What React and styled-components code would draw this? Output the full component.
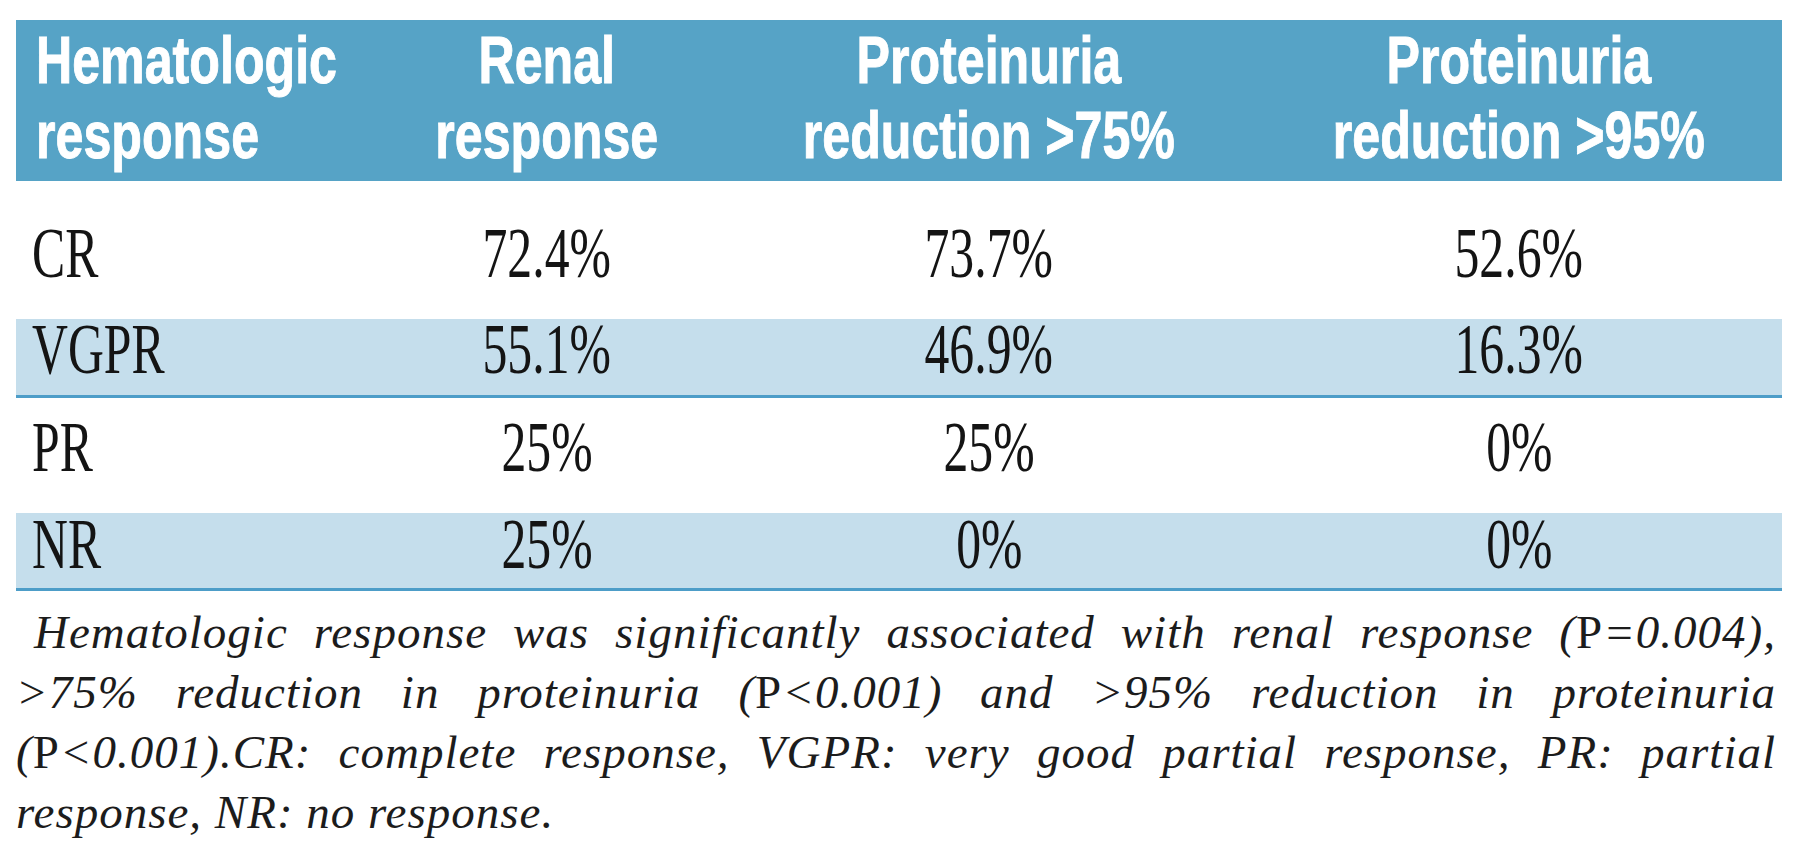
import React from 'react';
import styled, { createGlobalStyle } from 'styled-components';

const GlobalStyle = createGlobalStyle`
  body {
    margin: 0;
    background: #ffffff;
  }
`;

const COLUMNS = '356px 350px 534px 526px';

const Page = styled.div`
  width: 1766px;
  padding: 20px 18px 0 16px;
`;

const HeaderRow = styled.div`
  display: grid;
  grid-template-columns: ${COLUMNS};
  height: 161px;
  box-sizing: border-box;
  padding-top: 3px;
  background: #56a3c6;
  color: #ffffff;
  font-family: 'Liberation Sans', Arial, sans-serif;
  font-weight: 700;
  font-size: 66px;
  line-height: 75px;
  -webkit-text-stroke: 1px #ffffff;
`;

const HeadCell = styled.div`
  display: flex;
  justify-content: ${({ $left }) => ($left ? 'flex-start' : 'center')};
  padding-left: ${({ $left }) => ($left ? '20px' : '0')};
  text-align: ${({ $left }) => ($left ? 'left' : 'center')};
`;

// the print fonts are condensed faces, none installed, so squeeze the text
const Squeeze = styled.span`
  display: inline-block;
  white-space: nowrap;
  transform: scaleX(${({ $sx }) => $sx});
  transform-origin: ${({ $left }) => ($left ? 'left' : 'center')} top;
`;

const BodyRow = styled.div`
  display: grid;
  grid-template-columns: ${COLUMNS};
  box-sizing: border-box;
  height: ${({ $h }) => $h}px;
  padding-top: ${({ $pt }) => $pt}px;
  background: ${({ $shaded }) => ($shaded ? '#c5deec' : '#ffffff')};
  border-bottom: ${({ $shaded }) => ($shaded ? '3px solid #4d9dc8' : '0')};
  color: #141414;
  font-family: 'Liberation Serif', 'Times New Roman', serif;
  font-size: 71px;
  line-height: 56px;
`;

const Cell = styled.div`
  display: flex;
  justify-content: ${({ $left }) => ($left ? 'flex-start' : 'center')};
  padding-left: ${({ $left }) => ($left ? '16px' : '0')};
`;

const Caption = styled.div`
  margin-top: 11px;
  padding-right: 6px;
  color: #1c1c1c;
  font-family: 'Liberation Serif', 'Times New Roman', serif;
  font-style: italic;
  font-size: 47px;
  line-height: 60px;
  letter-spacing: 1px;
`;

const CaptionLine = styled.div`
  padding-left: ${({ $indent }) => ($indent ? '18px' : '0')};
  text-align: justify;
  text-align-last: ${({ $last }) => ($last ? 'left' : 'justify')};
`;

const Roman = styled.span`
  font-style: normal;
`;

const header = [
  { lines: ['Hematologic', 'response'], left: true },
  { lines: ['Renal', 'response'] },
  { lines: ['Proteinuria', 'reduction >75%'] },
  { lines: ['Proteinuria', 'reduction >95%'] },
];

const rows = [
  { label: 'CR', values: ['72.4%', '73.7%', '52.6%'], h: 138, pt: 44 },
  { label: 'VGPR', values: ['55.1%', '46.9%', '16.3%'], h: 79, pt: 2, shaded: true },
  { label: 'PR', values: ['25%', '25%', '0%'], h: 115, pt: 21 },
  { label: 'NR', values: ['25%', '0%', '0%'], h: 78, pt: 3, shaded: true },
];

const App = () => (
  <>
    <GlobalStyle />
    <Page>
      <HeaderRow>
        {header.map((col, i) => (
          <HeadCell key={i} $left={col.left}>
            <Squeeze $sx={0.76} $left={col.left}>
              {col.lines[0]}
              <br />
              {col.lines[1]}
            </Squeeze>
          </HeadCell>
        ))}
      </HeaderRow>

      {rows.map((row) => (
        <BodyRow key={row.label} $h={row.h} $pt={row.pt} $shaded={row.shaded}>
          <Cell $left>
            <Squeeze $sx={0.7} $left>
              {row.label}
            </Squeeze>
          </Cell>
          {row.values.map((v, i) => (
            <Cell key={i}>
              <Squeeze $sx={0.7}>{v}</Squeeze>
            </Cell>
          ))}
        </BodyRow>
      ))}

      <Caption>
        <CaptionLine $indent>
          Hematologic response was significantly associated with renal response (<Roman>P</Roman>=0.004),
        </CaptionLine>
        <CaptionLine>
          &gt;75% reduction in proteinuria (<Roman>P</Roman>&lt;0.001) and &gt;95% reduction in proteinuria
        </CaptionLine>
        <CaptionLine>
          (<Roman>P</Roman>&lt;0.001).CR: complete response, VGPR: very good partial response, PR: partial
        </CaptionLine>
        <CaptionLine $last>response, NR: no response.</CaptionLine>
      </Caption>
    </Page>
  </>
);

export default App;
